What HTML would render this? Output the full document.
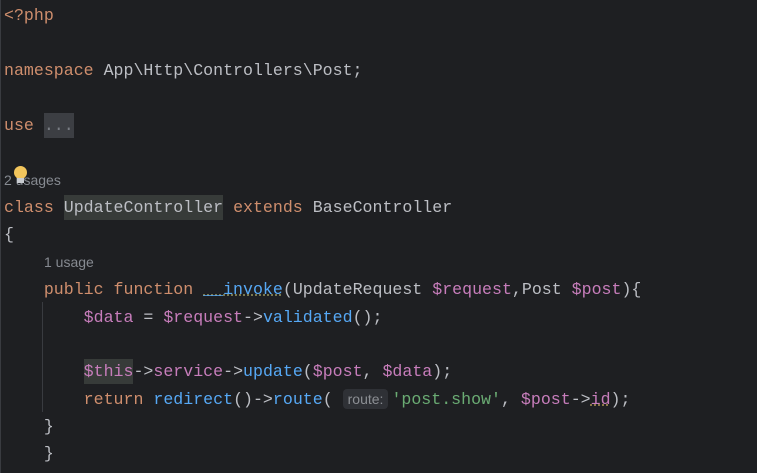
<!DOCTYPE html>
<html><head><meta charset="utf-8"><style>
body{margin:0;width:757px;height:473px;background:#1e1f22;overflow:hidden;position:relative;font-family:"Liberation Mono",monospace;font-size:16.6px;color:#bcbec4}
.l{position:absolute;left:4px;height:27px;line-height:27px;white-space:pre}
.k{color:#cf8e6d}.v{color:#c77dbb}.f{color:#56a8f5}.s{color:#6aab73}
.h{font-family:"Liberation Sans",sans-serif;font-size:14px;color:#868a91}
.hl{background:#373b39;padding:3px 0}
.hint{font-family:"Liberation Sans",sans-serif;font-size:14px;color:#8c8f94;background:#2f3136;border-radius:4px;padding:2px 5px;margin-right:3px}
</style></head><body>
<div style="position:absolute;left:0;top:0;width:1px;height:473px;background:#393b40"></div>
<div style="position:absolute;left:42px;top:302px;width:1px;height:110px;background:#393b40"></div>
<div class="l" style="top:2px"><span class="k">&lt;?php</span></div>
<div class="l" style="top:57px"><span class="k">namespace</span> App\Http\Controllers\Post;</div>
<div class="l" style="top:112px"><span class="k">use</span> <span style="background:#3c3e43;color:#7a7e85;padding:3px 0">...</span></div>
<div class="l h" style="top:167px">2 usages</div>
<div style="position:absolute;left:14px;top:166px;width:13px;height:13px;border-radius:50%;background:#f2c55c"></div>
<div style="position:absolute;left:17px;top:178px;width:7px;height:5px;background:#c9ccd1"></div>
<div class="l" style="top:194px"><span class="k">class</span> <span class="hl">UpdateController</span> <span class="k">extends</span> BaseController</div>
<div class="l" style="top:221px">{</div>
<div class="l h" style="top:249px;left:44px">1 usage</div>
<div class="l" style="top:276px">    <span class="k">public function</span> <span class="f" style="text-decoration:underline dotted #8a8a5a">__invoke</span>(UpdateRequest <span class="v">$request</span>,Post <span class="v">$post</span>){</div>
<div class="l" style="top:304px">        <span class="v">$data</span> = <span class="v">$request</span>-&gt;<span class="f">validated</span>();</div>
<div class="l" style="top:358px">        <span class="v hl">$this</span>-&gt;<span class="v">service</span>-&gt;<span class="f">update</span>(<span class="v">$post</span>, <span class="v">$data</span>);</div>
<div class="l" style="top:386px">        <span class="k">return</span> <span class="f">redirect</span>()-&gt;<span class="f">route</span>( <span class="hint">route:</span><span class="s">'post.show'</span>, <span class="v">$post</span>-&gt;<span class="v" style="text-decoration:underline dotted #a08a50">id</span>);</div>
<div class="l" style="top:413px">    }</div>
<div class="l" style="top:440px">    }</div>
</body></html>
